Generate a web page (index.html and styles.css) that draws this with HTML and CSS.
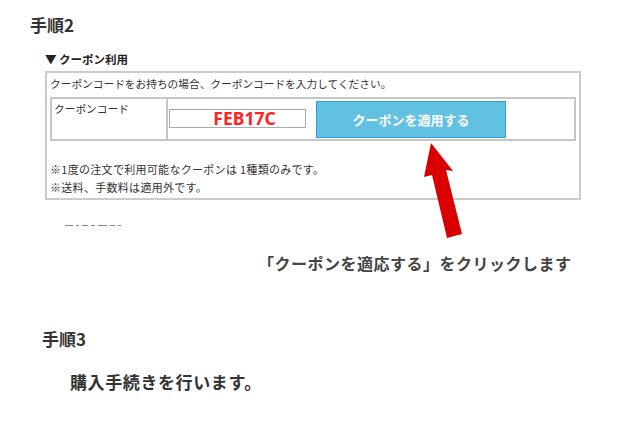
FILE: index.html
```html
<!DOCTYPE html>
<html lang="ja">
<head>
    <meta charset="UTF-8">
    <meta name="viewport" content="width=device-width, initial-scale=1.0">
    <title>クーポンのご利用方法</title>
    <link rel="stylesheet" href="styles.css">
</head>
<body>
    <div class="page">
        <h2 class="step step2">手順2</h2>

        <div class="shot">
            <div class="shot-title">▼ クーポン利用</div>
            <div class="coupon-box">
                <p class="lead">クーポンコードをお持ちの場合、クーポンコードを入力してください。</p>
                <div class="coupon-row">
                    <div class="coupon-label">クーポンコード</div>
                    <div class="coupon-field">
                        <div class="code-input">FEB17C</div>
                        <button class="apply-btn">クーポンを適用する</button>
                    </div>
                </div>
                <p class="note note-first">※1度の注文で利用可能なクーポンは 1種類のみです。</p>
                <p class="note">※送料、手数料は適用外です。</p>
            </div>
            <!-- top edge of the next line, cut off in the screenshot -->
            <div class="cut-off" aria-hidden="true">
                <i class="w8"></i><i class="w3"></i><i class="w6"></i><i class="w4"></i><i class="w9"></i><i class="w5"></i><i class="w3"></i>
            </div>
        </div>

        <p class="caption">「クーポンを適応する」をクリックします</p>

        <h2 class="step step3">手順3</h2>
        <p class="step-text">購入手続きを行います。</p>

        <svg class="arrow" width="50" height="100" viewBox="0 0 50 100">
            <polygon points="11,3 33,31 26,30 42,94 27,98 12,35 4,37" fill="#d90000"/>
        </svg>
    </div>
</body>
</html>
```

FILE: styles.css
```css
* {
    box-sizing: border-box;
    margin: 0;
    padding: 0;
}
body {
    background: #fff;
    color: #333;
    font-family: "Noto Sans CJK JP", "Noto Sans", sans-serif;
}
.page {
    position: relative;
    width: 625px;
    height: 427px;
    padding-top: 15px;
}
.step {
    font-size: 17px;
    line-height: 20px;
    font-weight: 700;
    color: #333;
}
.step2 { padding-left: 30px; }
.step3 {
    padding-left: 42px;
    margin-top: 56px;
}
.shot {
    margin-left: 45px;
    width: 536px;
    margin-top: 16px;
}
.shot-title {
    font-size: 11.5px;
    line-height: 16px;
    font-weight: 700;
    color: #222;
    padding-bottom: 4px;
}
.coupon-box {
    border: 2px solid #cbcbcb;
    height: 129px;
    padding: 3px 3px 0 3px;
}
.lead {
    font-size: 10.7px;
    line-height: 16px;
    color: #333;
}
.coupon-row {
    display: flex;
    margin-top: 5px;
    border: 2px solid #c6c6c6;
    height: 44px;
}
.coupon-label {
    width: 116px;
    border-right: 2px solid #c6c6c6;
    font-size: 10.7px;
    line-height: 14px;
    padding: 3px 0 0 2px;
}
.coupon-field {
    display: flex;
    align-items: flex-start;
    padding-left: 1px;
}
.code-input {
    margin-top: 10px;
    width: 137px;
    height: 19px;
    border: 1px solid #aaa;
    padding-left: 14px;
    text-align: center;
    font-family: "Noto Sans", "Open Sans", sans-serif;
    font-size: 17.5px;
    line-height: 17px;
    font-weight: 700;
    color: #ff2020;
}
.apply-btn {
    margin: 2px 0 0 10px;
    width: 190px;
    height: 37px;
    border: 1px solid #2e9fd6;
    background: #62c1e3;
    color: #fff;
    font-family: "Noto Sans CJK JP", sans-serif;
    font-size: 13px;
    font-weight: 700;
    cursor: pointer;
}
.note {
    font-size: 11px;
    line-height: 18px;
    letter-spacing: 0.3px;
    color: #333;
}
.note-first { margin-top: 19px; }
.cut-off {
    display: flex;
    gap: 3px;
    margin: 24px 0 0 20px;
    height: 3px;
}
.cut-off i {
    display: block;
    height: 1px;
    margin-top: 1px;
    background: #888;
}
.cut-off .w3 { width: 3px; }
.cut-off .w4 { width: 4px; }
.cut-off .w5 { width: 5px; }
.cut-off .w6 { width: 6px; }
.cut-off .w8 { width: 8px; }
.cut-off .w9 { width: 9px; }
.caption {
    margin: 26px 0 0 258px;
    font-size: 16px;
    line-height: 20px;
    font-weight: 700;
    letter-spacing: 0.5px;
    color: #444;
}
.step-text {
    margin: 22px 0 0 70px;
    font-size: 17px;
    line-height: 22px;
    font-weight: 700;
    letter-spacing: 0.6px;
    color: #333;
}
.arrow {
    position: absolute;
    left: 420px;
    top: 140px;
}
```
